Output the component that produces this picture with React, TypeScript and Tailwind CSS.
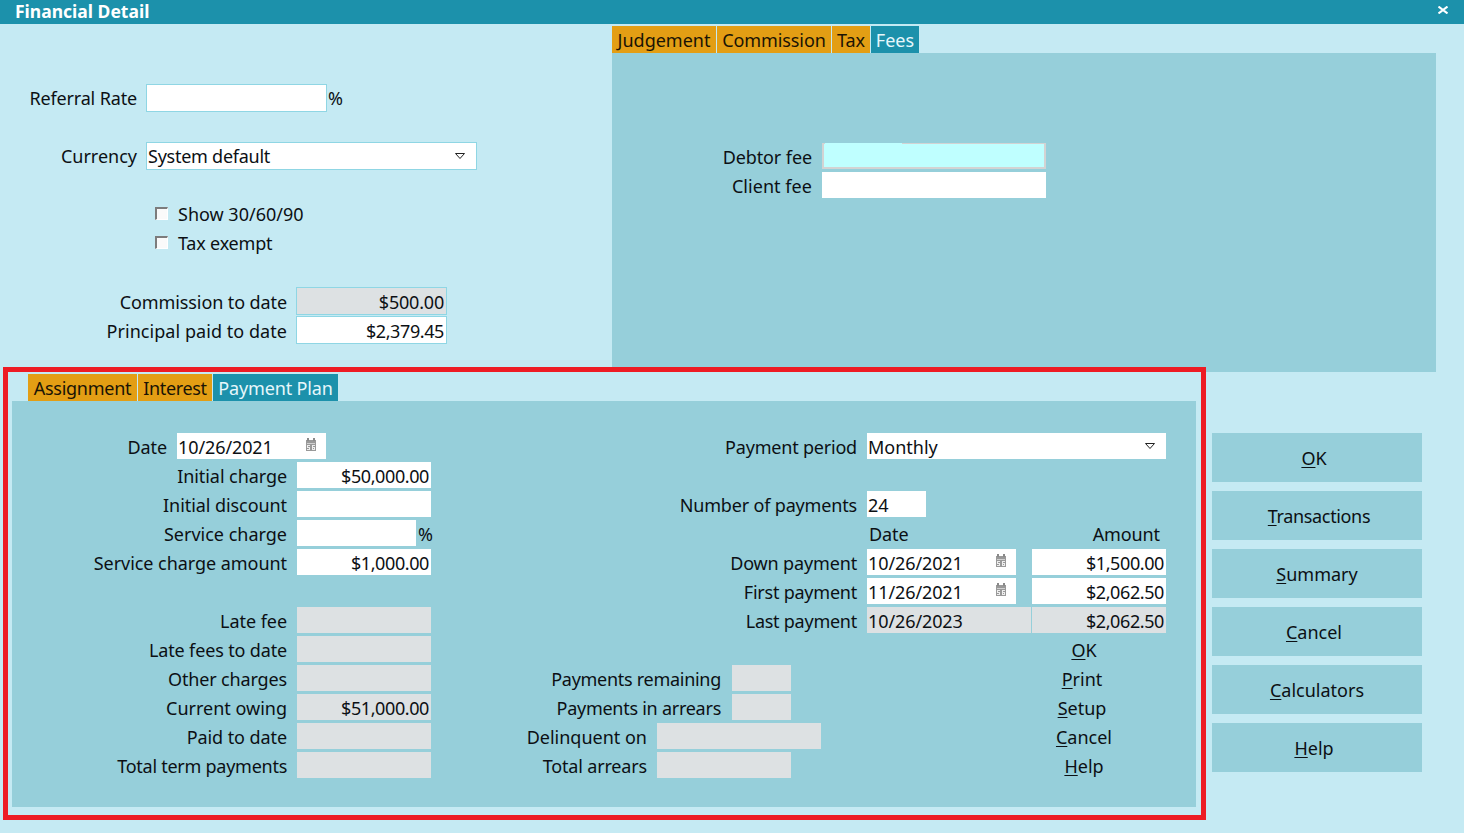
import React from "react";

const font = { fontFamily: '"Noto Sans", sans-serif' };

function Calendar() {
  return (
    <svg width="12" height="13" viewBox="0 0 12 13" className="absolute right-[9px] top-[5px]">
      <rect x="1" y="2" width="10" height="11" fill="#999" />
      <rect x="2" y="0" width="2" height="3" fill="#8a8a8a" />
      <rect x="8" y="0" width="2" height="3" fill="#8a8a8a" />
      <rect x="2" y="5" width="8" height="1" fill="#d0d0d0" />
      <path d="M2 7H5V8H3V9H5V12H2V11H4V10H2ZM7 7H10V8H8V9H10V12H7Z" fill="#eee" />
      <rect x="8" y="10" width="1" height="1" fill="#999" />
    </svg>
  );
}

function Arrow() {
  return (
    <svg width="10" height="6" viewBox="0 0 10 6" className="absolute right-[11px] top-[10px]">
      <path d="M0.5 0.5H9.5L5 5.5Z" fill="#fff" stroke="#222" strokeWidth="1" />
    </svg>
  );
}

function Field({ w, h = "h-[26px]", value = "", right = false, ro = false, border = false, cls = "pt-[2px]", extra }: { w: string; h?: string; value?: string; right?: boolean; ro?: boolean; border?: boolean; cls?: string; extra?: React.ReactNode }) {
  return (
    <div
      className={`relative flex items-center shrink-0 whitespace-nowrap ${w} ${h} ${ro ? "bg-[#dde1e3]" : "bg-white"} ${border ? "border border-[#8fd6e4] pl-[1px] pr-[2px]" : "pl-[1px] pr-[2px]"} ${right ? "justify-end" : ""} ${cls}`}
    >
      {value}
      {extra}
    </div>
  );
}

function Label({ w, children, cls = "" }: { w: string; children: React.ReactNode; cls?: string }) {
  return <div className={`shrink-0 pt-[2px] text-right whitespace-nowrap ${w} ${cls}`}>{children}</div>;
}

function Tab({ w, label, active = false, cls = "" }: { w: string; label: string; active?: boolean; cls?: string }) {
  return (
    <div className={`flex h-[27px] items-center justify-center whitespace-nowrap ${w} ${active ? "bg-[#1c91ab] text-[#e6f7fb]" : "bg-[#e39e14] text-[#1a1405]"} ${cls}`}>
      {label}
    </div>
  );
}

function U({ k, rest }: { k: string; rest: string }) {
  return (
    <span>
      <span className="underline underline-offset-2">{k}</span>
      {rest}
    </span>
  );
}

function LeftRow({ label, children, cls = "" }: { label: string; children: React.ReactNode; cls?: string }) {
  return (
    <div className="flex h-[26px] items-center">
      <Label w="w-[275px]" cls={`mr-[10px] ${cls}`}>{label}</Label>
      {children}
    </div>
  );
}

function SideButton({ k, rest, cls = "" }: { k: string; rest: string; cls?: string }) {
  return (
    <div className={`flex h-[49px] w-[210px] items-center justify-center bg-[#96cfda] ${cls}`}>
      <U k={k} rest={rest} />
    </div>
  );
}

export default function App() {
  return (
    <div style={font} className="relative flex h-[833px] w-[1464px] flex-col overflow-hidden bg-[#c5eaf3] text-[18px] leading-[26px] text-[#0c1014]">
      <div className="flex h-6 shrink-0 items-center justify-between bg-[#1c91ab] pl-[15px] pr-[16px] text-white">
        <span className="-mt-[3px] text-[17.5px] font-bold leading-6">Financial Detail</span>
        <svg width="10" height="8" viewBox="0 0 10 8" className="-mt-[4px]"><path d="M0.5 0.5L9.5 7.5M9.5 0.5L0.5 7.5" stroke="#fff" strokeWidth="2" /></svg>
      </div>

      <div className="flex h-[348px] shrink-0">
        <div className="w-[612px] shrink-0 pt-[60px]">
          <div className="flex h-[28px] items-center">
            <Label w="w-[137px]" cls="mr-[9px] !pt-0 tracking-[-0.15px]">Referral Rate</Label>
            <Field w="w-[181px]" h="h-[28px]" border cls="" />
            <span className="ml-[1px]">%</span>
          </div>
          <div className="mt-[30px] flex h-[28px] items-center">
            <Label w="w-[137px]" cls="mr-[9px] !pt-0">Currency</Label>
            <Field w="w-[331px]" h="h-[28px]" border cls="tracking-[-0.25px]" value="System default" extra={<Arrow />} />
          </div>
          <div className="mt-[31px] flex flex-col gap-[3px] pl-[155px]">
            <div className="flex h-[26px] items-center">
              <span className="-mt-[1px] h-[13px] w-[13px] border-t-2 border-l-2 border-r border-b border-t-[#7c7c7c] border-l-[#7c7c7c] border-r-white border-b-white bg-[#fafafa]" />
              <span className="ml-[10px]">Show 30/60/90</span>
            </div>
            <div className="flex h-[26px] items-center">
              <span className="-mt-[1px] h-[13px] w-[13px] border-t-2 border-l-2 border-r border-b border-t-[#7c7c7c] border-l-[#7c7c7c] border-r-white border-b-white bg-[#fafafa]" />
              <span className="ml-[10px] tracking-[-0.2px]">Tax exempt</span>
            </div>
          </div>
          <div className="mt-[31px] flex flex-col gap-[1px] pl-[12px]">
            <div className="flex h-[28px] items-center">
              <Label w="w-[275px]" cls="mr-[9px] tracking-[-0.1px]">Commission to date</Label>
              <Field w="w-[151px]" h="h-[28px]" border ro right cls="pt-[2px] tracking-[-0.2px]" value="$500.00" />
            </div>
            <div className="flex h-[28px] items-center">
              <Label w="w-[275px]" cls="mr-[9px] tracking-[0.05px]">Principal paid to date</Label>
              <Field w="w-[151px]" h="h-[28px]" border right cls="pt-[2px] tracking-[-0.4px]" value="$2,379.45" />
            </div>
          </div>
        </div>

        <div className="flex w-[824px] shrink-0 flex-col pt-[2px]">
          <div className="flex gap-[1px]">
            <Tab w="w-[104px]" label="Judgement" />
            <Tab w="w-[114px]" label="Commission" cls="tracking-[-0.1px]" />
            <Tab w="w-[38px]" label="Tax" />
            <Tab w="w-[48px]" label="Fees" active />
          </div>
          <div className="flex-1 bg-[#96cfda] pt-[90px]">
            <div className="flex h-[26px] items-center">
              <Label w="w-[200px]" cls="mr-[10px] tracking-[-0.1px]">Debtor fee</Label>
              <div className="relative h-[26px] w-[224px] border-2 border-t border-[#d3d3d3] bg-[#bfffff]">
                <div className="absolute top-[-1px] left-[1px] h-[1px] w-[77px] bg-[#bfffff]" />
              </div>
            </div>
            <div className="mt-[3px] flex h-[26px] items-center">
              <Label w="w-[200px]" cls="mr-[10px] tracking-[0.05px]">Client fee</Label>
              <Field w="w-[224px]" />
            </div>
          </div>
        </div>
      </div>

      <div className="flex min-h-0 flex-1">
        <div className="w-[1212px] shrink-0 pl-[12px]">
          <div className="flex pl-[16px] pt-[2px]">
            <div className="flex gap-[1px]">
              <Tab w="w-[109px]" label="Assignment" cls="tracking-[-0.25px]" />
              <Tab w="w-[74px]" label="Interest" cls="tracking-[-0.35px]" />
              <Tab w="w-[125px]" label="Payment Plan" active cls="tracking-[-0.15px]" />
            </div>
          </div>
          <div className="flex h-[406px] w-[1184px] bg-[#96cfda] pt-[32px]">
            <div className="flex w-[423px] shrink-0 flex-col gap-[3px]">
              <div className="flex h-[26px] items-center">
                <Label w="w-[155px]" cls="mr-[10px] tracking-[-0.1px]">Date</Label>
                <Field w="w-[149px]" cls="pt-[2px] tracking-[-0.1px]" value="10/26/2021" extra={<Calendar />} />
              </div>
              <LeftRow label="Initial charge" cls="tracking-[-0.07px]"><Field w="w-[134px]" right cls="pt-[2px] tracking-[-0.4px]" value="$50,000.00" /></LeftRow>
              <LeftRow label="Initial discount" cls="tracking-[-0.07px]"><Field w="w-[134px]" /></LeftRow>
              <LeftRow label="Service charge">
                <Field w="w-[119px]" />
                <span className="ml-[2px] pt-[2px]">%</span>
              </LeftRow>
              <LeftRow label="Service charge amount" cls="tracking-[-0.05px]"><Field w="w-[134px]" right cls="pt-[2px] tracking-[-0.4px]" value="$1,000.00" /></LeftRow>
              <div className="h-[26px]" />
              <LeftRow label="Late fee" cls="tracking-[-0.05px]"><Field w="w-[134px]" ro /></LeftRow>
              <LeftRow label="Late fees to date" cls="tracking-[-0.15px]"><Field w="w-[134px]" ro /></LeftRow>
              <LeftRow label="Other charges" cls="tracking-[-0.15px]"><Field w="w-[134px]" ro /></LeftRow>
              <LeftRow label="Current owing"><Field w="w-[134px]" ro right cls="pt-[2px] tracking-[-0.4px]" value="$51,000.00" /></LeftRow>
              <LeftRow label="Paid to date" cls="tracking-[-0.08px]"><Field w="w-[134px]" ro /></LeftRow>
              <LeftRow label="Total term payments" cls="tracking-[-0.26px]"><Field w="w-[134px]" ro /></LeftRow>
            </div>

            <div className="flex w-[731px] shrink-0 flex-col gap-[3px]">
              <div className="flex h-[26px] items-center">
                <Label w="w-[422px]" cls="mr-[10px] tracking-[-0.2px]">Payment period</Label>
                <Field w="w-[299px]" value="Monthly" extra={<Arrow />} />
              </div>
              <div className="h-[26px]" />
              <div className="flex h-[26px] items-center">
                <Label w="w-[422px]" cls="mr-[10px] tracking-[-0.17px]">Number of payments</Label>
                <Field w="w-[59px]" value="24" />
              </div>
              <div className="flex h-[26px] items-center pl-[434px] pt-[2px]">
                <span className="tracking-[-0.1px]">Date</span>
                <span className="ml-auto mr-[6px] tracking-[-0.1px]">Amount</span>
              </div>
              <div className="flex h-[26px] items-center">
                <Label w="w-[422px]" cls="mr-[10px] tracking-[-0.15px]">Down payment</Label>
                <Field w="w-[149px]" cls="pt-[2px] tracking-[-0.1px]" value="10/26/2021" extra={<Calendar />} />
                <Field w="ml-[16px] w-[134px]" right cls="pt-[2px] tracking-[-0.4px]" value="$1,500.00" />
              </div>
              <div className="flex h-[26px] items-center">
                <Label w="w-[422px]" cls="mr-[10px] tracking-[-0.23px]">First payment</Label>
                <Field w="w-[149px]" cls="pt-[2px] tracking-[-0.1px]" value="11/26/2021" extra={<Calendar />} />
                <Field w="ml-[16px] w-[134px]" right cls="pt-[2px] tracking-[-0.4px]" value="$2,062.50" />
              </div>
              <div className="flex h-[26px] items-center">
                <Label w="w-[422px]" cls="mr-[10px] tracking-[-0.25px]">Last payment</Label>
                <Field w="w-[164px]" ro cls="pt-[2px] tracking-[-0.1px]" value="10/26/2023" />
                <Field w="ml-[1px] w-[134px]" ro right cls="pt-[2px] tracking-[-0.4px]" value="$2,062.50" />
              </div>
              <div className="flex h-[26px] items-center pt-[2px]">
                <div className="ml-auto w-[164px] text-center"><U k="O" rest="K" /></div>
              </div>
              <div className="flex h-[26px] items-center">
                <Label w="w-[286px]" cls="mr-[11px] tracking-[-0.28px]">Payments remaining</Label>
                <Field w="w-[59px]" ro />
                <div className="ml-auto w-[164px] pt-[2px] pr-[4px] text-center"><U k="P" rest="rint" /></div>
              </div>
              <div className="flex h-[26px] items-center">
                <Label w="w-[286px]" cls="mr-[11px] tracking-[-0.26px]">Payments in arrears</Label>
                <Field w="w-[59px]" ro />
                <div className="ml-auto w-[164px] pt-[2px] pr-[4px] text-center"><U k="S" rest="etup" /></div>
              </div>
              <div className="flex h-[26px] items-center">
                <Label w="w-[212px]" cls="mr-[10px]">Delinquent on</Label>
                <Field w="w-[164px]" ro />
                <div className="ml-auto w-[164px] pt-[2px] text-center"><U k="C" rest="ancel" /></div>
              </div>
              <div className="flex h-[26px] items-center">
                <Label w="w-[212px]" cls="mr-[10px] tracking-[-0.17px]">Total arrears</Label>
                <Field w="w-[134px]" ro />
                <div className="ml-auto w-[164px] pt-[2px] text-center"><U k="H" rest="elp" /></div>
              </div>
            </div>
          </div>
        </div>

        <div className="flex w-[210px] shrink-0 flex-col gap-[9px] pt-[61px]">
          <SideButton k="O" rest="K" cls="pr-[6px]" />
          <SideButton k="T" rest="ransactions" cls="pl-[4px] tracking-[-0.35px]" />
          <SideButton k="S" rest="ummary" />
          <SideButton k="C" rest="ancel" cls="pr-[6px]" />
          <SideButton k="C" rest="alculators" />
          <SideButton k="H" rest="elp" cls="pr-[6px]" />
        </div>
      </div>

      <div className="pointer-events-none absolute left-[3px] top-[367px] h-[453px] w-[1203px] border-[5px] border-[#ed1c24]" />
    </div>
  );
}
